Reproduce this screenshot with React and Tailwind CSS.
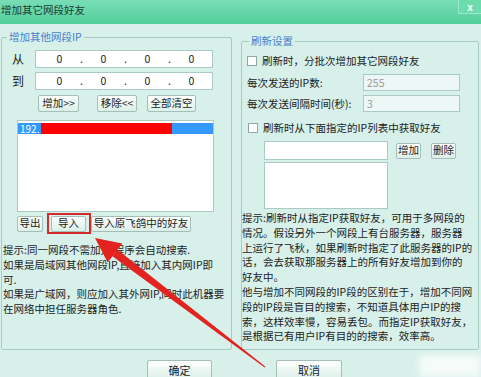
import React from "react";

const FONT = { fontFamily: '"Microsoft YaHei", "Noto Sans CJK SC", "Noto Sans", sans-serif' };

const Btn = ({ children, className = "" }) => (
  <div
    className={`flex items-center justify-center border border-[#a3bfb7] rounded-[2px] bg-gradient-to-b from-[#fdfffe] to-[#dcefe9] text-[10.5px] leading-none text-[#1c1c1c] ${className}`}
  >
    {children}
  </div>
);

const IpBox = () => (
  <div className="flex h-[18px] w-[178px] items-center border border-[#aacbc3] bg-white pl-[3px] text-[10.5px] text-[#222]">
    {[0, 1, 2, 3].map((i) => (
      <React.Fragment key={i}>
        <span className="w-[42px] text-center">0</span>
        {i < 3 && <span className="w-[3px] text-center">.</span>}
      </React.Fragment>
    ))}
  </div>
);

const Check = () => (
  <div className="h-[10px] w-[10px] shrink-0 border border-[#8fa9a2] bg-white" />
);

const leftTips = [
  "提示:同一网段不需加入,程序会自动搜索.",
  "如果是局域网其他网段IP,直接加入其内网IP即",
  "可.",
  "如果是广域网，则应加入其外网IP,同时此机器要",
  "在网络中担任服务器角色.",
];

const rightTips = [
  "提示:刷新时从指定IP获取好友，可用于多网段的",
  "情况。假设另外一个网段上有台服务器，服务器",
  "上运行了飞秋，如果刷新时指定了此服务器的IP的",
  "话，会去获取那服务器上的所有好友增加到你的",
  "好友中。",
  "他与增加不同网段的IP段的区别在于，增加不同网",
  "段的IP段是盲目的搜索，不知道具体用户IP的搜",
  "索，这样效率慢，容易丢包。而指定IP获取好友，",
  "是根据已有用户IP有目的的搜索，效率高。",
];

export default function App() {
  return (
    <div
      className="relative h-[377px] w-[481px] overflow-hidden bg-[#d7f0ea] text-[#1c1c1c]"
      style={FONT}
    >
      {/* title bar */}
      <div className="flex h-[24px] items-start justify-between bg-gradient-to-b from-[#78ddb6] to-[#52cf9b]">
        <span className="pl-[1px] pt-[3px] text-[10.5px] leading-[14px] text-[#1d3b30]">增加其它网段好友</span>
        <div className="flex h-[14px] w-[23px] items-center justify-center border-b border-l border-[#9ce8c8] bg-[#6cdcad] text-[10px] font-bold leading-[12px] text-white">
          x
        </div>
      </div>

      <div className="flex items-start">
        {/* left group */}
        <fieldset className="ml-[1px] mt-[6px] h-[320px] w-[231px] rounded-[2px] border border-[#a6ccc2] px-0 pb-0">
          <legend className="ml-[5px] px-[2px] text-[10.5px] leading-[14px] text-[#4a7fcf]">增加其他网段IP</legend>

          <div className="mt-[6px] flex items-center">
            <span className="w-[33px] pl-[10px] text-[12px] leading-none">从</span>
            <IpBox />
          </div>
          <div className="mt-[4px] flex items-center">
            <span className="w-[33px] pl-[10px] text-[12px] leading-none">到</span>
            <IpBox />
          </div>

          <div className="mt-[5px] flex">
            <Btn className="ml-[36px] h-[17px] w-[41px]">增加&gt;&gt;</Btn>
            <Btn className="ml-[18px] h-[17px] w-[40px]">移除&lt;&lt;</Btn>
            <Btn className="ml-[10px] h-[17px] w-[49px]">全部清空</Btn>
          </div>

          <div className="ml-[15px] mt-[8px] h-[92px] w-[197px] border border-[#aacbc3] bg-white pt-[2px]">
            <div className="flex h-[11px] items-center bg-[#3399ff] text-[10px] leading-none text-white">
              <span className="pl-[2px]">192.</span>
              <div className="ml-[2px] h-[11px] w-[131px] bg-[#ff0000]" />
            </div>
          </div>

          <div className="mt-[1px] flex items-center">
            <Btn className="ml-[15px] h-[16px] w-[26px]">导出</Btn>
            <div className="ml-[4px] flex h-[21px] w-[44px] items-center border-2 border-[#d42a2a] pl-[2px]">
              <Btn className="h-[16px] w-[35px]">导入</Btn>
            </div>
            <Btn className="h-[16px] w-[100px]">导入原飞鸽中的好友</Btn>
          </div>

          <div className="ml-[1px] mt-[9px] text-[10.5px] leading-[14.8px]">
            {leftTips.map((t) => (
              <div key={t} className="whitespace-nowrap">{t}</div>
            ))}
          </div>
        </fieldset>

        {/* right group */}
        <fieldset className="ml-[9px] mt-[10px] h-[316px] w-[238px] rounded-[2px] border border-[#a6ccc2] px-0 pb-0">
          <legend className="ml-[7px] px-[2px] text-[10.5px] leading-[14px] text-[#4a7fcf]">刷新设置</legend>

          <div className="mt-[6px] flex h-[14px] items-center pl-[5px] text-[10.5px]">
            <Check />
            <span className="ml-[5px]">刷新时，分批次增加其它网段好友</span>
          </div>

          <div className="mt-[6px] flex items-center pl-[5px] text-[10.5px]">
            <span className="w-[116px]">每次发送的IP数:</span>
            <div className="flex h-[17px] w-[97px] items-center border border-[#aacbc3] bg-[#ecf7f6] pl-[3px] text-[#999]">255</div>
          </div>
          <div className="mt-[4px] flex items-center pl-[5px] text-[10.5px]">
            <span className="w-[116px]">每次发送间隔时间(秒):</span>
            <div className="flex h-[17px] w-[97px] items-center border border-[#aacbc3] bg-[#ecf7f6] pl-[3px] text-[#999]">3</div>
          </div>

          <div className="mt-[9px] flex h-[14px] items-center pl-[6px] text-[10.5px]">
            <Check />
            <span className="ml-[5px]">刷新时从下面指定的IP列表中获取好友</span>
          </div>

          <div className="mt-[6px] flex items-center">
            <div className="ml-[22px] h-[19px] w-[124px] border border-[#aacbc3] bg-white" />
            <Btn className="ml-[8px] h-[16px] w-[25px]">增加</Btn>
            <Btn className="ml-[10px] h-[16px] w-[25px]">删除</Btn>
          </div>
          <div className="ml-[22px] mt-[2px] h-[47px] w-[124px] border border-[#aacbc3] bg-white" />

          <div className="mt-[2px] text-[10.5px] leading-[14.8px]">
            {rightTips.map((t) => (
              <div key={t} className="whitespace-nowrap">{t}</div>
            ))}
          </div>
        </fieldset>
      </div>

      {/* bottom buttons */}
      <div className="mt-[10px] flex">
        <Btn className="ml-[147px] h-[20px] w-[65px] text-[11px]">确定</Btn>
        <Btn className="ml-[64px] h-[20px] w-[66px] text-[11px]">取消</Btn>
      </div>

      {/* glare patch */}
      <div className="absolute bottom-0 right-0 h-[22px] w-[62px] bg-[#f4fbf9] blur-[3px]" />

      {/* red annotation arrow */}
      <svg className="pointer-events-none absolute left-0 top-0" width="481" height="377">
        <polygon points="95,238 122.3,243.4 107.7,262.6" fill="#e3231f" />
        <polygon points="117.6,249.8 265.3,366.6 264.7,367.4 112.4,256.2" fill="#e3231f" />
      </svg>
    </div>
  );
}
